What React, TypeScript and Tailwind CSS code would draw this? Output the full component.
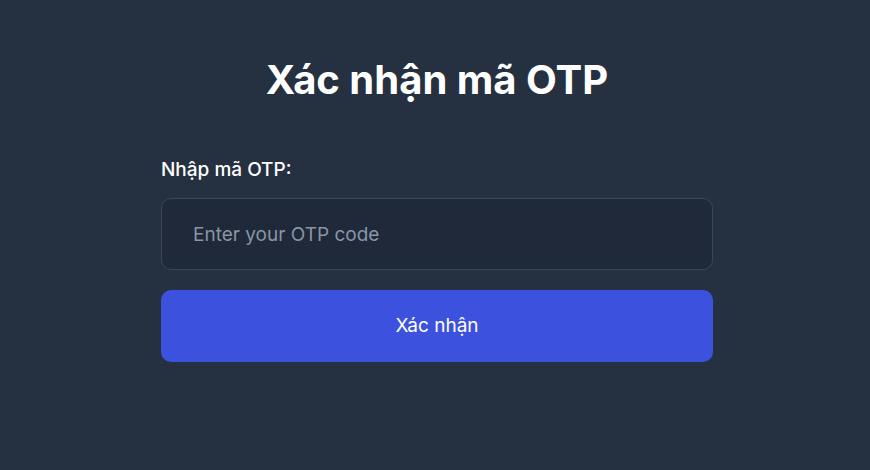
export default function App() {
  return (
    <div
      className="min-h-screen w-full bg-[#253041] pt-[58px]"
      style={{ fontFamily: 'Inter, "Noto Sans", sans-serif' }}
    >
      <div className="ml-[161px] w-[552px]">
        <h1 className="text-center text-[40px] leading-[44px] font-bold text-white">Xác nhận mã OTP</h1>

        <form className="mt-[56px] flex flex-col" onSubmit={(e) => e.preventDefault()}>
          <label htmlFor="otp" className="text-[19px] leading-6 font-medium text-white">
            Nhập mã OTP:
          </label>
          <input
            id="otp"
            type="text"
            placeholder="Enter your OTP code"
            className="mt-[16px] h-[72px] w-full rounded-[10px] border border-[#3b4657] bg-[#1f2939] px-[31px] text-[19px] text-white placeholder:text-[#8a95a5] focus:outline-none"
          />
          <button
            type="submit"
            className="mt-[20px] h-[72px] w-full rounded-[10px] bg-[#3c52de] text-[19px] text-white"
          >
            Xác nhận
          </button>
        </form>
      </div>
    </div>
  );
}
